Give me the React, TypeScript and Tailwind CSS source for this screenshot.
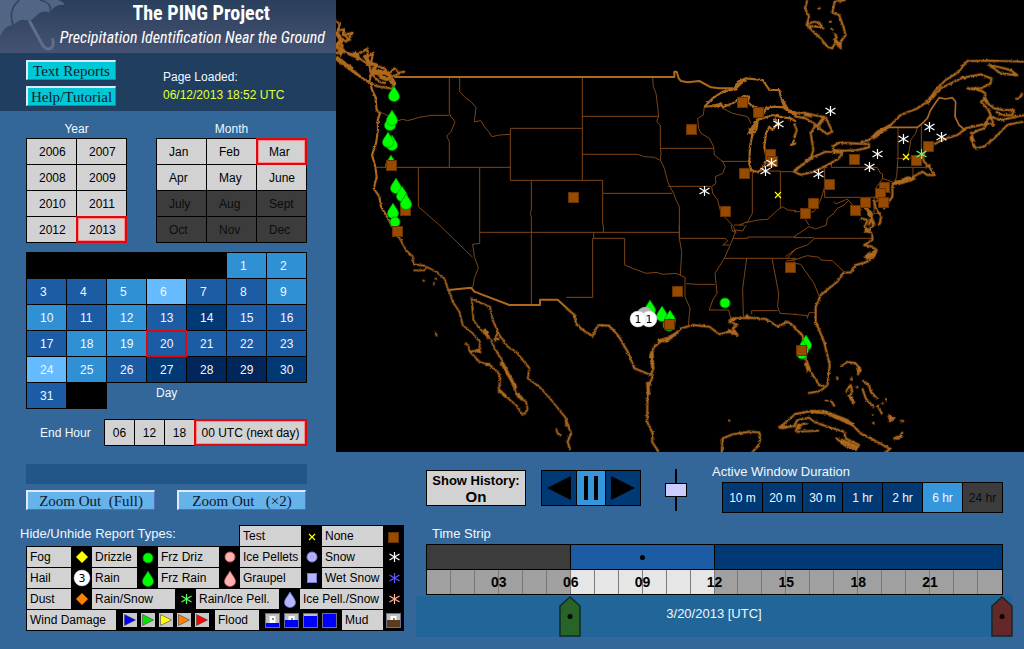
import React from "react";

const LIGHT = "bg-[#d2d2d2] text-black";
const DISABLED = "bg-[#3c3c3c] text-[#0c0c0c]";
const PICKED =
  "relative z-10 shadow-[0_0_0_1px_#dc0a0f,inset_0_0_0_1px_#dc0a0f,inset_0_0_0_2px_#ff8c8c]";
const PICKED_DARK = "relative z-10 shadow-[0_0_0_1px_#dc0a0f,inset_0_0_0_1px_#dc0a0f]";

const years = ["2006", "2007", "2008", "2009", "2010", "2011", "2012", "2013"];
const months = ["Jan", "Feb", "Mar", "Apr", "May", "June", "July", "Aug", "Sept", "Oct", "Nov", "Dec"];

const shades: Record<string, string> = {
  a: "bg-[#66bbff]",
  b: "bg-[#3090d4]",
  c: "bg-[#1c5ca4]",
  d: "bg-[#003973]",
  e: "bg-[#00265a]",
};
const dayShades = "bb" + "ccbaccb" + "bcbcdcc" + "cbbcccc" + "abcdeed" + "c";

function Drop({ x, y, fill = "#00ff00", stroke = "#009a00" }: { x: number; y: number; fill?: string; stroke?: string }) {
  return (
    <path
      d={`M${x} ${y - 8}C${x + 2} ${y - 4} ${x + 5.5} ${y - 1} ${x + 5.5} ${y + 2.5}A5.5 5 0 0 1 ${x - 5.5} ${y + 2.5}C${x - 5.5} ${y - 1} ${x - 2} ${y - 4} ${x} ${y - 8}Z`}
      fill={fill}
      stroke={stroke}
      strokeWidth="0.7"
    />
  );
}

function Star({ x, y, color = "#ffffff" }: { x: number; y: number; color?: string }) {
  return (
    <path
      d={`M${x + 0.5} ${y - 5}V${y + 5}M${x - 4.5} ${y - 3}L${x + 5.5} ${y + 3}M${x - 4.5} ${y + 3}L${x + 5.5} ${y - 3}`}
      stroke={color}
      strokeWidth="1.2"
      fill="none"
    />
  );
}

function Cross({ x, y }: { x: number; y: number }) {
  return <path d={`M${x - 3} ${y - 3}l6 6m0 -6l-6 6`} stroke="#ffff00" strokeWidth="1.2" />;
}

function Square({ x, y }: { x: number; y: number }) {
  return <rect x={x - 4.5} y={y - 4.5} width="10" height="10" fill="#964b00" stroke="#6a3200" />;
}

function Ball({ x, y, text }: { x: number; y: number; text: string }) {
  return (
    <g>
      <circle cx={x} cy={y} r="8" fill="#ffffff" stroke="#c8c8c8" strokeWidth="0.5" />
      <text x={x} y={y + 4} textAnchor="middle" fontSize="11" fill="#000" fontFamily="DejaVu Sans, sans-serif">
        {text}
      </text>
    </g>
  );
}

const squares = [
  [391, 165], [405, 210], [397, 231], [573, 197], [742, 102], [758, 112], [691, 129], [770, 154],
  [772, 161], [744, 173], [725, 211], [854, 159], [829, 184], [916, 160], [928, 146], [813, 203],
  [805, 213], [884, 187], [880, 193], [883, 202], [865, 202], [855, 210], [677, 291], [790, 267],
];
const stars = [
  [778, 124], [771, 163], [765, 171], [704, 191], [830, 111], [903, 139], [877, 154], [869, 167],
  [818, 174], [929, 127], [941, 137],
];
const drops = [
  [394, 94], [390, 123], [392, 118], [392, 143], [388, 140], [391, 163], [396, 186], [402, 194], [406, 202], [393, 211],
];

function StateMap() {
  return (
    <svg
      viewBox="0 0 2064 1356"
      preserveAspectRatio="xMidYMid slice"
      className="block h-full w-full bg-black"
      role="img"
      aria-label="Map of precipitation reports"
    >
      <defs>
        <filter id="rough" filterUnits="userSpaceOnUse" x="0" y="0" width="2064" height="1356" colorInterpolationFilters="sRGB">
          <feTurbulence type="fractalNoise" baseFrequency="0.12" numOctaves="2" seed="4" />
          <feDisplacementMap in="SourceGraphic" scale="8" xChannelSelector="R" yChannelSelector="G" />
        </filter>
      </defs>
      <g fill="none" stroke="#7d4516" strokeWidth="3" strokeLinejoin="round">
        <path d="M130 335L145 342 185 362 200 358 215 362 250 352 285 346H340M340 231V340L345 350 357 365 345 395 332 408 340 425V502M118 502H523M247 502V620L310 675 410 772M431 502V730L410 733 415 770 427 803 415 835 410 863M371 231V275L390 295 405 305 420 322 415 365 435 362 445 380 458 395 468 410 490 405 523 403M690 385H523V541H800V675M586 541V630L583 640 586 650V915M431 697H1030" />
        <g transform="translate(690 0)">
          <path d="M49 231V541M0 385H49M49 349H278M49 463H215L235 470 265 472 280 480M110 580H318M260 231L262 260 270 280 275 320 278 349 272 365 283 375V440L285 460 283 480 295 505 305 545 325 585 330 600 340 620V715M285 445H443M305 559H435M415 320L412 345 395 355 398 385 405 400 430 415 443 440 445 465 470 485 478 500 470 520 448 530 450 550 437 560 440 580 455 600 465 640 485 660 503 680 510 700 505 690M467 484H550M470 325L500 340 545 350 555 370M580 513H643L643 515H690M559 516V640L545 665 520 675M643 513V625M540 668L575 660 605 658 635 630 650 620 665 630 690 632" />
        </g>
        <g transform="translate(1374 0)">
          <path d="M312 382V470L308 530 300 550M370 382L365 400 350 420 347 445 340 475M382 375V455L390 470M308 475H345L385 465M308 502H395M357 502V530M112 490V502H250L258 518 266 522 265 535 295 545M92 502V592H240M92 560L80 600 60 635 30 640M0 635H25L35 660 45 675M120 605L125 612 160 597 180 620 205 630M97 675L100 655 120 640 130 625 150 615 165 600M240 592V640L262 640M266 535L245 565 250 580 240 592" />
        </g>
        <g transform="translate(690 675)">
          <path d="M83 22V40M80 40H176V120L200 130 240 145 270 142 290 148 330 145 357 157M80 40V217H0M112 0V22M340 40L347 80 343 152M340 0V40H478L485 48 470 60 490 60M357 157V215L372 250 367 300M360 176L395 178H447M495 0L500 20 510 15 530 18 540 0M510 15L495 55 475 100 447 145 453 205 440 225 430 255H488L495 285M500 40H545V36H690M475 100H690M542 100L530 190 532 275M618 100L638 205 635 245 642 265 690 268M557 268V257H635M658 95L690 72" />
        </g>
        <g transform="translate(1374 675)">
          <path d="M60 40H232M0 38H60M-20 100L5 72 40 60 60 42M-24 108L0 105 40 92 75 97 80 105 115 107 150 140M-6 100L5 115 20 118 60 175 75 212M0 268L40 272V280L45 263 62 263M-180 0L-150 0M0 35L45 5 65 12 97 0" />
        </g>
      </g>
      <g fill="none" stroke="#ae691f" strokeWidth="6" strokeLinejoin="round">
        <path d="M175 231H1015V215H1022L1028 235 1035 243 1055 247 1090 243 1125 262 1150 265 1190 265" />
        <path d="M338 870L405 863 415 875 520 915H612V899H665L692 924" />
        <path d="M1659 382H1744L1759 370 1774 355 1784 330 1809 293 1829 297 1849 293 1859 305 1857 350 1869 375 1889 392" strokeWidth="5" />
      </g>
      <g fill="none" stroke="#ae691f" strokeWidth="6.5" strokeLinejoin="round" filter="url(#rough)">
        <path d="M0 60L12 75 5 92 25 88 20 105 50 98 30 125 15 115 20 140 5 130M25 105L45 122M0 160L20 150 40 163 70 175 100 195 105 225 100 245 80 235 50 210 20 190 0 175M20 155L60 165 85 152 95 145 95 172 112 158 105 188 130 200 145 205 160 220 175 205 190 218 205 215 180 225 150 235 120 220 105 225M0 178L50 215 90 242 120 258 145 262 170 266 177 250 170 236 150 240 130 232M110 225L130 245 150 250M104 250L108 270 118 290 122 330 132 340 125 360 126 390 120 430 108 465 118 500 122 530 113 565 130 590 135 620 150 645 175 690 190 713" />
        <path d="M0 95L15 120 0 140 20 150 10 165M55 155L70 180M85 165L100 190 120 195 110 215 135 215 140 225M140 215L165 228M0 172L50 208M165 240L172 255" strokeWidth="12" />
        <g transform="translate(690 0)">
          <path d="M415 320L440 295 470 275 505 268 515 245 540 235 590 240 610 270 640 270 645 295 650 300 655 325 690 345M415 320L445 318 465 310 470 322 500 310 530 290 550 290 545 305 560 320 580 325 590 345 600 325 625 320 655 322M580 350L565 370 560 400 552 440 550 490 555 510 575 516 590 505 603 480 595 440 600 400 610 380 620 390 635 370 625 355M545 405L575 365 570 395 555 400 550 385M575 360L620 345 650 352 675 355 690 365M690 430L675 435 685 420" />
          <path d="M503 270L525 248 540 238M445 318L468 314M648 300L665 330 690 342M550 400L562 380 570 385" strokeWidth="10" />
        </g>
        <g transform="translate(1374 0)">
          <path d="M40 0L33 25 45 50 38 75 55 92 80 115 100 140 115 145 125 125 140 145 140 125 155 105 148 80 135 45 115 38 122 5 155 0M40 72L60 65 75 68 88 85 70 80 45 78M105 65h8M110 85l8 5M120 100l10 15M72 24l8 2M0 340L30 338 60 345 95 352 115 395 100 402 75 385 60 370 35 355 0 348M0 370L8 390 0 415M65 375L50 400 58 450 52 470 30 490 10 505 0 512M0 515L30 490 60 470 95 455 145 458 135 475 100 495 60 515 20 524ZM115 440L135 428 175 430 225 432 225 442 190 450 150 452 120 450ZM200 425L225 420 250 395 290 375 320 345 370 325 400 305 425 270 455 240 495 215 505 200 520 183 600 182 690 185M400 310L440 265 500 235 560 223 592 235 590 250 560 265 520 265 555 270 575 280 570 300 560 305 580 325 590 345 572 372 515 385 490 405 455 415 425 430 400 445 385 465 390 485 405 500 422 525 400 525 385 515 340 540 295 550M690 365L670 368 640 375 600 415 570 440 545 445 530 415 535 400 555 390 570 385 580 370 600 375 590 350 620 360 690 345M580 310L600 325 630 330 660 330 655 345 625 345 605 335M585 195L620 220 670 226 650 210 610 200ZM665 298L680 290 685 278M530 395L540 425M295 552L340 532 362 537 320 550ZM295 550L295 590 270 625 262 605 248 600M240 600L245 625 262 650 255 675M205 600L215 625 235 640 225 675M200 655L220 660 215 675M395 500L410 495" />
          <path d="M120 115L135 135M30 342L55 348M70 380L90 352M290 376L235 415M222 630L240 675M300 548L350 538M570 290L580 310" strokeWidth="10" />
        </g>
        <g transform="translate(0 675)">
          <path d="M190 38L210 75 230 95 232 118 265 122 300 140 325 160 335 190 340 200 350 230 370 260 380 300 410 325 432 350 430 375 400 380M385 355L397 360 400 378 430 410 460 420 485 440 493 460 488 495 510 515 540 540 560 570 575 555 570 530 545 515 535 490 520 450 495 400 475 370 465 345 430 310 412 285 407 220 430 232 462 245 470 285 490 330 515 365 540 380 580 430 575 460 610 485 650 530 690 580V605M232 136H265L272 130M260 165l6 4M295 160l8 2M292 175l5 5M297 322l6 12M660 612L665 625 675 633M475 345L485 320" strokeWidth="5.5" />
          <path d="M445 312L458 338M495 410L540 490M545 505L560 525M488 495L510 515M420 375L435 382M450 418l12 0M475 345L490 340" strokeWidth="10" />
        </g>
        <g transform="translate(690 675)">
          <path d="M0 248L25 270 30 295 50 315 80 333 95 300 130 302 155 330 185 380 205 430 255 450 262 430 252 390 265 365 290 345 330 325 345 310 380 300 430 305 460 328 490 320 515 330 500 310 515 300 490 290 500 280 550 278 600 282 635 305 665 290 690 308M262 450L245 490 243 590 260 625 258 650 280 684M467 684L470 640 500 628 550 620 580 622 582 645 575 665 560 680M690 565L655 595 640 608 690 603M0 585L15 625 5 650 12 675M488 585l4 4" />
          <path d="M258 380L260 430M275 345L300 348 335 322M245 470L248 510M495 285L510 280M485 315L505 325M540 270L550 280M645 608L665 605" strokeWidth="10" />
        </g>
        <g transform="translate(1374 675)">
          <path d="M210 0L220 15 215 20 240 0M225 20L235 25 235 45 210 60 235 65 248 75 240 95 225 85 212 95 235 100 215 112 185 120 170 142 148 143 130 170 80 210 65 245 65 290 90 350 107 420 100 480 80 497 42 505M0 308L25 330 35 400 50 440 75 480 90 482M0 568L50 558 95 560 160 585 200 625 240 645 288 672 270 684M0 605L10 585 45 578 60 590 100 605 150 620 155 640 195 660 185 675 150 660 125 638M5 620L12 600 40 595M5 620L75 617M140 425L160 410 185 415 200 435 190 450M130 455v10M172 455v12M155 500L170 480 175 500 165 515 180 535M205 465L225 480 230 500 250 522M205 490L215 520 240 548M250 540L265 568M275 520v8M280 570L300 580 285 590M318 588h12M300 640L320 635 325 622 315 640ZM235 568v4M238 590v8M185 486h8M92 527h8M110 525L122 545M262 535h6" />
          <path d="M50 560L95 562 180 600M195 425v18M170 515L180 535M285 575l8 10M140 645L190 668M10 610L20 605M305 638l12 0M215 100L245 80M35 410L45 440M212 15l15 5" strokeWidth="11" />
        </g>
      </g>
      <g transform="scale(3) translate(-336 0)">
        {drops.map(([x, y]) => (
          <Drop key={`${x}-${y}`} x={x} y={y} />
        ))}
        <circle cx="395" cy="222" r="5" fill="#00ff00" stroke="#009a00" />
        <circle cx="725" cy="303" r="5" fill="#00ff00" stroke="#009a00" />
        {squares.map(([x, y]) => (
          <Square key={`${x}-${y}`} x={x} y={y} />
        ))}
        <Drop x={406} y={202} />
        {stars.map(([x, y]) => (
          <Star key={`${x}-${y}`} x={x} y={y} />
        ))}
        <Star x={921} y={154} color="#66ff66" />
        <Cross x={778} y={195} />
        <Cross x={906} y={157} />
        <Drop x={650} y={308} />
        <Drop x={662} y={314} />
        <Drop x={670} y={318} />
        <circle cx="669" cy="325" r="6" fill="#00c800" stroke="#009a00" />
        <Square x={669} y={324} />
        <circle cx="645" cy="315" r="8" fill="#b4b4b4" />
        <Ball x={649} y={319} text="1" />
        <Ball x={638} y={319} text="1" />
        <Drop x={806} y={343} />
        <Drop x={803} y={348} />
        <circle cx="802" cy="354" r="5" fill="#00ff00" stroke="#009a00" />
        <Square x={801} y={350} />
      </g>
    </svg>
  );
}

function Glyph({ kind }: { kind: string }) {
  return (
    <svg viewBox="0 0 21 20" className="block h-5 w-[21px] shrink-0">
      {kind === "fog" && <path d="M11 4l6 6-6 6-6-6z" fill="#ffff00" stroke="#8c8c00" strokeWidth=".6" />}
      {kind === "dust" && <path d="M11 4l6 6-6 6-6-6z" fill="#ff7f00" stroke="#8c4600" strokeWidth=".6" />}
      {kind === "hail" && <Ball x={11} y={10} text="3" />}
      {kind === "drizzle" && <circle cx="11" cy="11" r="5" fill="#00ff00" stroke="#009a00" />}
      {kind === "rain" && <Drop x={11} y={11} />}
      {kind === "frzdriz" && <circle cx="11" cy="10" r="5" fill="#ffb0b0" stroke="#c85a5a" />}
      {kind === "frzrain" && <Drop x={11} y={11} fill="#ffb0b0" stroke="#c85a5a" />}
      {kind === "pellets" && (
        <g>
          <circle cx="11" cy="10" r="5" fill="#b4b4ff" stroke="#7878dc" />
          <circle cx="11" cy="10" r="1.5" fill="#c8c8ff" stroke="#7878dc" strokeWidth=".5" />
        </g>
      )}
      {kind === "graupel" && <rect x="6.5" y="5.5" width="9" height="9" fill="#b4b4ff" stroke="#7878dc" />}
      {kind === "icerain" && <Drop x={11} y={11} fill="#b4b4ff" stroke="#7878dc" />}
      {kind === "test" && <Cross x={11} y={11} />}
      {kind === "none" && <Square x={10} y={11} />}
      {kind === "snow" && <Star x={11} y={10} />}
      {kind === "wetsnow" && <Star x={11} y={10} color="#5a5aff" />}
      {kind === "icesnow" && <Star x={11} y={10} color="#ffb4a0" />}
      {kind === "rainsnow" && <Star x={11} y={10} color="#66ff66" />}
    </svg>
  );
}

function Wind({ color }: { color: string }) {
  return (
    <svg viewBox="0 0 14 14" className="block size-3.5">
      <rect width="14" height="14" fill="#c8c8c8" />
      <path d="M1.5 1.5L12.5 7 1.5 12.5Z" fill={color} stroke="#444" strokeWidth=".6" />
    </svg>
  );
}

function Flood({ level, color = "#0000ff" }: { level: number; color?: string }) {
  return (
    <svg viewBox="0 0 15 15" className="block size-[15px]">
      <rect x=".5" y=".5" width="14" height="14" fill="#bebebe" stroke="#6e6e8c" />
      <rect x="4.5" y="3" width="6" height="7" fill="#fff" />
      <rect x="7" y="5" width="2" height="2" fill="#8c8c8c" />
      <rect x="1" y={14 - level} width="13" height={level} fill={color} />
    </svg>
  );
}

function Type({ label, kind, width }: { label: string; kind: string; width: string }) {
  return (
    <>
      <button className={`h-5 pl-[3px] text-left leading-5 whitespace-nowrap ${LIGHT} ${width}`}>{label}</button>
      <Glyph kind={kind} />
    </>
  );
}

function Marker({ fill, place }: { fill: string; place: string }) {
  return (
    <svg viewBox="0 0 22 41" className={`absolute top-0 h-[41px] w-[22px] -translate-x-1/2 ${place}`}>
      <path d="M11 1L21 10V40H1V10Z" fill={fill} stroke="#0f2a2a" strokeWidth="1.5" />
      <circle cx="11" cy="20.5" r="2.5" fill="#000" />
    </svg>
  );
}

const serifButton =
  "h-5 border-t-2 border-l-2 border-r border-b border-t-[#e4e8ff] border-l-[#e4e8ff] border-r-[#5a6cb4] border-b-[#5a6cb4] font-['Liberation_Serif',serif] text-[15px] leading-4 text-[#101828] whitespace-pre";

export default function App() {
  return (
    <div className="min-h-screen bg-[#336699] font-['Liberation_Sans',Arial,sans-serif] text-xs text-[#f0f8ff]">
      <div className="flex">
        <aside className="w-[336px] shrink-0 pb-[6px]">
          <header className="relative h-[53px] overflow-hidden bg-linear-to-b from-[#293f5c] to-[#465372]">
            <svg viewBox="0 0 210 159" className="absolute top-0 left-0 h-[53px] w-[70px]">
              <path d="M0 0H172Q190 4 194 15Q165 10 150 38Q128 28 108 48L90 64Q60 50 40 76Q18 72 0 108Z" fill="#506684" />
              <path d="M58 0Q22 30 40 76M120 0Q158 8 150 38" fill="none" stroke="#31475f" strokeWidth="5" />
              <path d="M90 66L126 132Q140 156 156 142Q162 134 158 118" fill="none" stroke="#5e6f8c" strokeWidth="9" strokeLinecap="round" />
            </svg>
            <div className="relative pr-[11px] font-['Roboto_Condensed','Liberation_Sans',sans-serif] whitespace-nowrap text-white">
              <h1 className="pr-[55px] text-right text-[20px] leading-[26px] font-bold">The PING Project</h1>
              <p className="text-right text-[16px] leading-6 italic">Precipitation Identification Near the Ground</p>
            </div>
          </header>
          <section className="flex h-[58px] gap-[47px] bg-[#203f60] pt-[7px] pl-[26px]">
            <div className="flex w-[90px] flex-col gap-[6px]">
              <button className={`${serifButton} bg-[#00c8d7]`}>Text Reports</button>
              <button className={`${serifButton} bg-[#00c8d7]`}>Help/Tutorial</button>
            </div>
            <div className="pt-2 leading-[18px]">
              <p>Page Loaded:</p>
              <p className="text-[#e6ff32]">06/12/2013 18:52 UTC</p>
            </div>
          </section>
          <div className="flex gap-[29px] pt-[9px] pl-[26px]">
            <section className="w-[101px]">
              <h2 className="h-[18px] text-center leading-[18px]">Year</h2>
              <div className="grid grid-cols-2 gap-px bg-black p-px">
                {years.map((y) => (
                  <button key={y} className={`h-[25px] pl-3 text-left ${LIGHT} ${y === "2013" ? PICKED : ""}`}>
                    {y}
                  </button>
                ))}
              </div>
            </section>
            <section className="w-[151px]">
              <h2 className="h-[18px] text-center leading-[18px]">Month</h2>
              <div className="grid grid-cols-3 gap-px bg-black p-px">
                {months.map((m, i) => (
                  <button
                    key={m}
                    disabled={i > 5}
                    className={`h-[25px] pl-3 text-left ${i > 5 ? DISABLED : LIGHT} ${m === "Mar" ? PICKED : ""}`}
                  >
                    {m}
                  </button>
                ))}
              </div>
            </section>
          </div>
          <section className="mt-[9px] ml-[26px] w-[281px]">
            <div className="grid grid-cols-7 gap-px bg-black p-px">
              {[...dayShades.slice(0, 30)].map((s, i) => (
                <button
                  key={i}
                  className={`h-[25px] pl-[13px] text-left ${i === 0 ? "col-start-6" : ""} ${shades[s]} ${i === 19 ? PICKED_DARK : ""}`}
                >
                  {i + 1}
                </button>
              ))}
            </div>
            <div className="flex gap-[49px]">
              <div className="grid w-[81px] grid-cols-2 gap-px bg-black px-px pb-px">
                <button className={`h-[25px] pl-[13px] text-left ${shades.c}`}>31</button>
              </div>
              <h2 className="leading-5">Day</h2>
            </div>
          </section>
          <section className="mt-[10px] ml-10 flex items-center gap-[10px]">
            <h2 className="w-[54px] whitespace-nowrap">End Hour</h2>
            <div className="flex gap-px bg-black p-px">
              {["06", "12", "18"].map((h) => (
                <button key={h} className={`h-[25px] w-[29px] ${LIGHT}`}>
                  {h}
                </button>
              ))}
              <button className={`h-[25px] w-[111px] whitespace-nowrap ${LIGHT} ${PICKED}`}>00 UTC (next day)</button>
            </div>
          </section>
        </aside>
        <main className="min-w-0 flex-1 bg-black">
          <StateMap />
        </main>
      </div>

      <div className="flex pb-3">
        <div className="w-[416px] shrink-0 pt-3 pl-[26px]">
          <div className="h-5 w-[281px] bg-[#225588]" />
          <div className="mt-[6px] flex w-[280px] justify-between">
            <button className={`${serifButton} w-[129px] bg-[#66b2eb]`}>{"Zoom Out  (Full)"}</button>
            <button className={`${serifButton} w-[129px] bg-[#66b2eb]`}>{"Zoom Out   (×2)"}</button>
          </div>
          <div className="mt-[15px] w-[378px]">
            <div className="flex justify-between">
              <h2 className="-ml-[6px] text-[13px] leading-[18px]">Hide/Unhide Report Types:</h2>
              <div className="flex bg-black pt-px pl-px">
                <Type label="Test" kind="test" width="w-[61px]" />
                <Type label="None" kind="none" width="w-[61px]" />
              </div>
            </div>
            <div className="flex bg-black pt-px pl-px">
              <Type label="Fog" kind="fog" width="w-[44px]" />
              <Type label="Drizzle" kind="drizzle" width="w-[45px]" />
              <Type label="Frz Driz" kind="frzdriz" width="w-[61px]" />
              <Type label="Ice Pellets" kind="pellets" width="w-[61px]" />
              <Type label="Snow" kind="snow" width="w-[61px]" />
            </div>
            <div className="flex bg-black pt-px pl-px">
              <Type label="Hail" kind="hail" width="w-[44px]" />
              <Type label="Rain" kind="rain" width="w-[45px]" />
              <Type label="Frz Rain" kind="frzrain" width="w-[61px]" />
              <Type label="Graupel" kind="graupel" width="w-[61px]" />
              <Type label="Wet Snow" kind="wetsnow" width="w-[61px]" />
            </div>
            <div className="flex bg-black pt-px pl-px">
              <Type label="Dust" kind="dust" width="w-[44px]" />
              <Type label="Rain/Snow" kind="rainsnow" width="w-[83px]" />
              <Type label="Rain/Ice Pell." kind="icerain" width="w-[83px]" />
              <Type label="Ice Pell./Snow" kind="icesnow" width="w-[83px]" />
            </div>
            <div className="flex bg-black py-px pl-px">
              <button className={`h-5 w-[89px] pl-[3px] text-left leading-5 ${LIGHT}`}>Wind Damage</button>
              <div className="flex w-[99px] items-center justify-center gap-1">
                <Wind color="#0000ff" />
                <Wind color="#00e600" />
                <Wind color="#ffff00" />
                <Wind color="#ff7f00" />
                <Wind color="#ff0000" />
              </div>
              <button className={`h-5 w-[44px] pl-[3px] text-left leading-5 ${LIGHT}`}>Flood</button>
              <div className="flex w-[83px] items-center justify-center gap-1">
                <Flood level={4} />
                <Flood level={7} />
                <Flood level={11} />
                <Flood level={13} />
              </div>
              <button className={`h-5 w-[41px] pl-[3px] text-left leading-5 ${LIGHT}`}>Mud</button>
              <div className="flex w-[21px] items-center justify-center">
                <Flood level={7} color="#5a3c1e" />
              </div>
            </div>
          </div>
        </div>

        <div className="min-w-0 flex-1 pr-3">
          <div className="flex justify-between pt-[10px] pr-[9px] pl-[10px]">
            <div className="flex items-start gap-[15px] pt-2">
              <button className={`h-9 w-[100px] border border-black font-bold ${LIGHT}`}>
                <span className="block text-[13px] leading-[17px]">Show History:</span>
                <span className="block text-[15px] leading-4">On</span>
              </button>
              <div className="flex gap-px bg-black p-px">
                <button aria-label="Back" className="flex h-[34px] w-[34px] items-center justify-center bg-[#003973]">
                  <svg viewBox="0 0 24 24" className="size-6"><path d="M0 12L24 0V24Z" /></svg>
                </button>
                <button aria-label="Pause" className="flex h-[34px] w-7 items-center justify-center bg-[#3596dc]">
                  <svg viewBox="0 0 14 24" className="h-6 w-3.5"><path d="M0 0H4V24H0ZM10 0H14V24H10Z" /></svg>
                </button>
                <button aria-label="Forward" className="flex h-[34px] w-[34px] items-center justify-center bg-[#003973]">
                  <svg viewBox="0 0 24 24" className="size-6"><path d="M24 12L0 0V24Z" /></svg>
                </button>
              </div>
              <input
                type="range"
                aria-label="Speed"
                defaultValue={50}
                className="-mt-px ml-[9px] h-[42px] w-[22px] appearance-none bg-[linear-gradient(#000,#000)] bg-[length:2px_100%] bg-center bg-no-repeat [writing-mode:vertical-lr] [&::-webkit-slider-thumb]:h-[14px] [&::-webkit-slider-thumb]:w-[22px] [&::-webkit-slider-thumb]:appearance-none [&::-webkit-slider-thumb]:border [&::-webkit-slider-thumb]:border-black [&::-webkit-slider-thumb]:bg-[#ccccff]"
              />
            </div>
            <section>
              <h2 className="-ml-[10px] h-5 text-[13px] leading-5">Active Window Duration</h2>
              <div className="grid grid-cols-7 gap-px bg-black p-px">
                {["10 m", "20 m", "30 m", "1 hr", "2 hr", "6 hr", "24 hr"].map((d) => (
                  <button
                    key={d}
                    disabled={d === "24 hr"}
                    className={`h-[29px] w-[39px] whitespace-nowrap ${d === "6 hr" ? "bg-[#3596dc]" : d === "24 hr" ? DISABLED : "bg-[#003973]"}`}
                  >
                    {d}
                  </button>
                ))}
              </div>
            </section>
          </div>
          <section className="pt-3">
            <h2 className="h-[19px] pl-4 text-[13px] leading-[18px]">Time Strip</h2>
            <div className="mr-[9px] ml-[10px] border border-black bg-black">
              <div className="grid h-6 grid-cols-4">
                <div className="border-r border-black bg-[#3c3c3c]" />
                <div className="flex items-center justify-center border-r border-black bg-[#1c5ca4]">
                  <span className="size-[5px] rounded-full bg-black" />
                </div>
                <div className="col-span-2 bg-[#003973]" />
              </div>
              <div className="relative mt-px h-6">
                <div className="grid h-full grid-cols-24">
                  {Array.from({ length: 24 }, (_, i) => (
                    <div
                      key={i}
                      className={`${i < 23 ? "border-r border-[#787878]" : ""} ${i > 5 && i < 12 ? "bg-[#e6e6e6]" : "bg-[#a0a0a0]"}`}
                    />
                  ))}
                </div>
                <div className="absolute inset-0 grid grid-cols-24 text-center text-sm leading-6 font-bold text-black">
                  <span className="col-span-2 col-start-3">03</span>
                  <span className="col-span-2 col-start-6">06</span>
                  <span className="col-span-2 col-start-9">09</span>
                  <span className="col-span-2 col-start-12">12</span>
                  <span className="col-span-2 col-start-15">15</span>
                  <span className="col-span-2 col-start-18">18</span>
                  <span className="col-span-2 col-start-21">21</span>
                </div>
              </div>
            </div>
            <div className="mt-px h-[41px] bg-[#226699] px-[10px]">
              <div className="relative text-center text-[13px] leading-[36px]">
                3/20/2013 [UTC]
                <Marker fill="#286428" place="left-1/4" />
                <Marker fill="#642828" place="left-full" />
              </div>
            </div>
          </section>
        </div>
      </div>
    </div>
  );
}
